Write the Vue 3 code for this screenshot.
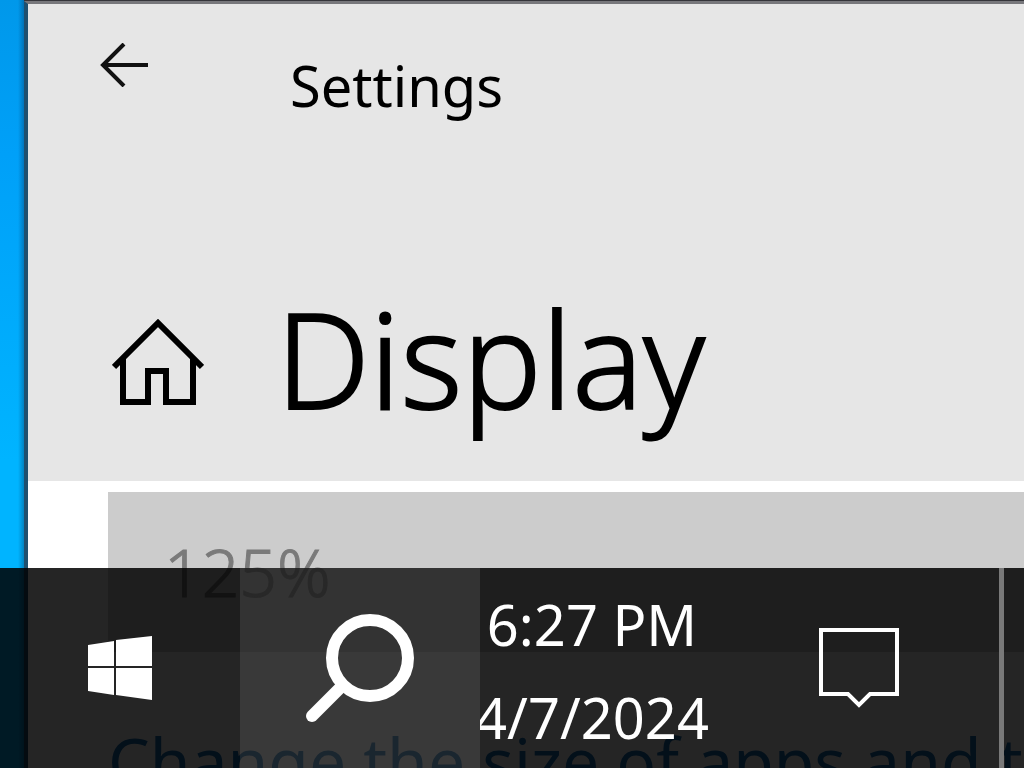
<script setup>
import { ref } from 'vue'

const scale = ref('125%')
const time = '6:27 PM'
const date = '4/7/2024'
</script>

<template>
  <div class="desktop">
    <main class="window">
      <header class="head">
        <div class="titlebar">
          <button class="back" type="button" aria-label="Back">
            <svg width="50" height="44" viewBox="0 0 50 44" fill="none" stroke="#111" stroke-width="4">
              <path d="M24 1 3 22 24 43M3 22H48" />
            </svg>
          </button>
          <span class="app-name">Settings</span>
        </div>
        <div class="heading">
          <button class="home" type="button" aria-label="Home">
            <svg width="92" height="88" viewBox="0 0 92 88" fill="none" stroke="#000" stroke-width="6">
              <path d="M2 48 46 4 90 48" />
              <path d="M11 38V83H36V52H54V83H81V38" />
            </svg>
          </button>
          <h1>Display</h1>
        </div>
      </header>
      <section class="content">
        <select v-model="scale" class="scale" aria-label="Scale" disabled>
          <option>125%</option>
        </select>
        <p class="caption">Change the size of apps and t</p>
      </section>
    </main>

    <nav class="taskbar" aria-label="Taskbar">
      <button class="start" type="button" aria-label="Start">
        <svg width="64" height="64" viewBox="0 0 64 64" fill="#fff">
          <path d="M0 9 26 5V30H0ZM28 4 64 0V30H28ZM0 32H26V59L0 55ZM28 32H64V64L28 59Z" />
        </svg>
      </button>
      <button class="search" type="button" aria-label="Search">
        <svg width="108" height="108" viewBox="0 0 108 108" fill="none" stroke="#fff" stroke-width="12">
          <circle cx="64" cy="44" r="38" />
          <path d="M36 72 6 102" stroke-linecap="round" />
        </svg>
      </button>
      <button class="clock" type="button">
        <span>{{ time }}</span>
        <span>{{ date }}</span>
      </button>
      <button class="notices" type="button" aria-label="Notifications">
        <svg width="80" height="80" viewBox="0 0 80 80" fill="none" stroke="#fff" stroke-width="4">
          <path d="M2 2H78V66H51L40 77 29 66H2Z" />
        </svg>
      </button>
      <button class="peek" type="button" aria-label="Show desktop"></button>
    </nav>
  </div>
</template>

<style>
body {
  margin: 0;
  overflow: hidden;
}
</style>

<style scoped>
.desktop {
  position: relative;
  box-sizing: border-box;
  height: 100vh;
  padding-left: 24px;
  overflow: hidden;
  background: linear-gradient(90deg, transparent 18px, rgba(0, 40, 80, 0.35) 24px),
    linear-gradient(#0098ea, #00a0f8 20%, #00b4ff 60%);
  font-family: "Noto Sans", "Open Sans", sans-serif;
}
button {
  display: flex;
  align-items: center;
  justify-content: center;
  padding: 0;
  border: 0;
  background: none;
  color: inherit;
  font: inherit;
}
svg {
  display: block;
}
.window {
  min-height: 100%;
  border-left: 4px solid #1f506f;
  border-top: 3px solid #77777b;
  box-shadow: 0 -1px #35353a;
  margin-top: 1px;
  background: #fff;
}
.head {
  height: 477px;
  background: #e6e6e6;
  color: #000;
}
.titlebar,
.heading {
  display: grid;
  grid-template-columns: 260px 1fr;
  align-items: start;
}
.titlebar {
  height: 240px;
  padding-top: 39px;
  box-sizing: border-box;
}
.back {
  width: 50px;
  margin-left: 72px;
}
.home {
  width: 92px;
  margin-left: 84px;
  margin-top: 75px;
}
.app-name {
  padding-left: 2px;
  font-size: 56px;
  line-height: 84px;
}
h1 {
  margin: 0 0 0 -12px;
  font-size: 132px;
  font-weight: 300;
  line-height: 228px;
  -webkit-text-stroke: 2px #000;
}
.content {
  padding: 11px 0 0 80px;
}
.scale {
  display: block;
  appearance: none;
  box-sizing: border-box;
  width: 100%;
  height: 160px;
  padding: 0 56px 2px;
  border: 0;
  border-radius: 0;
  background: #ccc;
  color: #7a7a7a;
  opacity: 1;
  font: 300 66px "Noto Sans", "Open Sans", sans-serif;
  -webkit-text-stroke: 1px #7a7a7a;
}
.caption {
  margin: 64px 0 0;
  color: #1a6cb0;
  font-size: 66px;
  line-height: 88px;
  white-space: nowrap;
}
.taskbar {
  position: absolute;
  inset: auto 0 0;
  display: flex;
  height: 200px;
  background: rgba(0, 0, 0, 0.855);
  color: #fff;
}
.start,
.search {
  width: 240px;
}
.search {
  background: rgba(255, 255, 255, 0.095);
}
.clock {
  flex-direction: column;
  box-sizing: border-box;
  width: 232px;
  padding: 6px 8px 0 0;
  overflow: hidden;
  font-size: 56px;
  line-height: 93px;
  white-space: nowrap;
}
.notices {
  flex: 1;
  padding-left: 6px;
}
.peek {
  width: 25px;
  border-left: 5px solid #797979;
}
</style>
